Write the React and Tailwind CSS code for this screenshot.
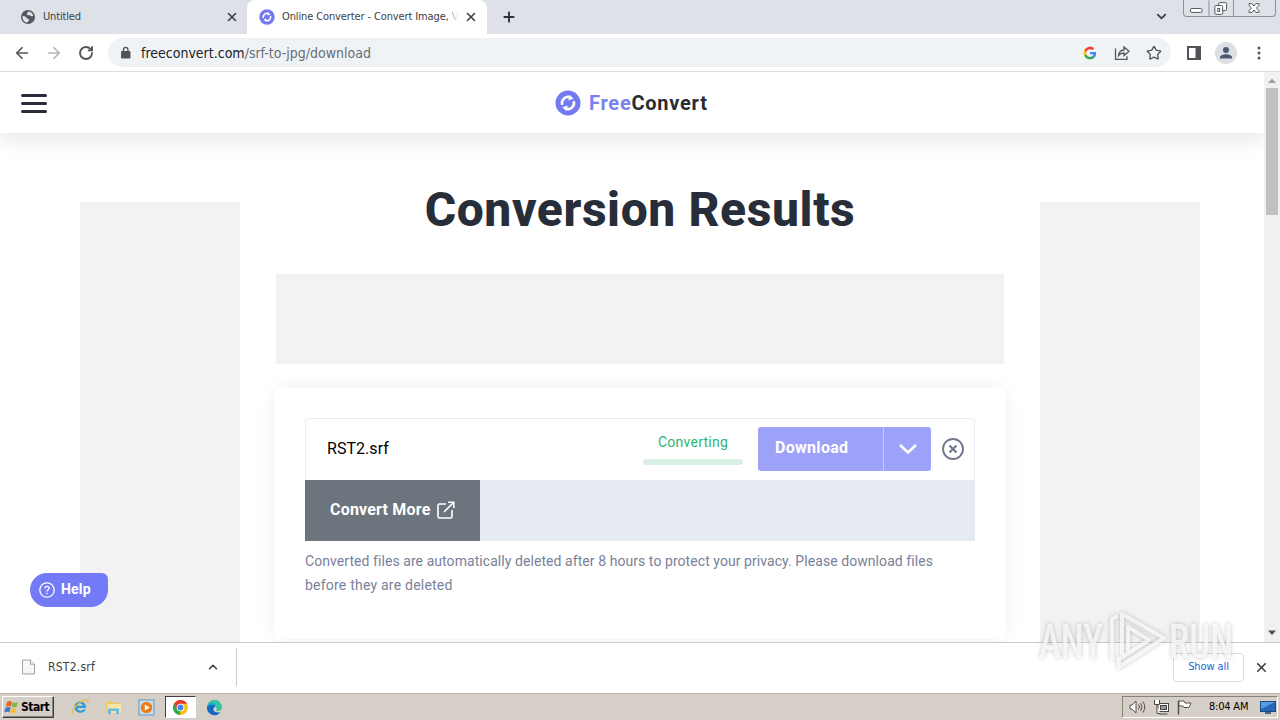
import { Star, X, Plus, ChevronDown, ChevronUp, ArrowLeft, ArrowRight, RotateCw } from "lucide-react";

function GlobeIcon() {
  return (
    <svg viewBox="0 0 16 16" className="size-4 shrink-0">
      <circle cx="8" cy="8" r="7" fill="#54575c" />
      <path d="M2.500 7.200c2.400-.4 3.600.8 4.400 2 .8 1 2.200.2 2.200 1.600 0 1.200-1.200 1.500-1.700 2.800C4.500 13.200 2.200 11 2.500 7.200ZM8 2.500c2.600 0 4.800 1.800 5.300 4.300-1 .9-2.400.4-3.300-.3-.9-.6-2.700.2-3.200-.9C6.500 4.700 7.800 4 8 2.500Z" fill="#dee1e6" />
    </svg>
  );
}

function ConvertLogo({ className }) {
  return (
    <svg viewBox="0 0 26 26" className={className}>
      <circle cx="13" cy="13" r="12.500" fill="#7279f2" />
      <g fill="none" stroke="#fff" strokeWidth="2.600">
        <path d="M7.300 14.800A6 6 0 0 1 15.500 7.500" />
        <path d="M18.700 11.200a6 6 0 0 1-8.200 7.300" />
      </g>
      <path d="m14.500 4.800 4.200 4-5.300 1.800ZM11.500 21.200l-4.200-4 5.300-1.800Z" fill="#fff" />
    </svg>
  );
}

function TabStrip() {
  return (
    <div className="flex h-[34px] bg-[#dee1e8] text-[11px] text-[#3c4043]">
      <div className="flex w-[247px] items-center pl-5">
        <GlobeIcon />
        <span className="ml-[7px] flex-1 tracking-[-0.15px]">Untitled</span>
        <X className="mr-2 size-[14px] text-[#3c4043]" strokeWidth={2.6} />
      </div>
      <div className="flex w-[240px] items-center rounded-t-lg bg-white pl-3">
        <ConvertLogo className="size-4 shrink-0" />
        <span className="ml-[7px] flex-1 whitespace-nowrap tracking-[-0.12px]">
          Online Converter - Convert Image,{" "}
          <span className="bg-gradient-to-r from-gray-400 to-white bg-clip-text text-transparent">V</span>
        </span>
        <X className="mr-[9px] size-[14px] text-[#3c4043]" strokeWidth={2.6} />
      </div>
      <Plus className="mt-[9px] ml-[14px] size-4 text-[#2f3237]" strokeWidth={2.8} />
      <div className="flex-1" />
      <ChevronDown className="mt-[9px] mr-[14px] size-[15px]" strokeWidth={2.8} />
      <div className="mr-1 flex h-[17px] w-[93px] rounded-b-[4px] border border-t-0 border-[#8c9097]">
        <svg viewBox="0 0 93 17" className="h-[17px] w-[92px]" fill="none" stroke="#53565c">
          <path d="M25.500 0v16M50.500 0v16" stroke="#8c9097" />
          <rect x="6.500" y="8.500" width="12" height="4" rx="1.500" fill="#fff" />
          <rect x="35.500" y="2.500" width="8" height="8" rx="1" fill="#fff" />
          <rect x="31.500" y="5.500" width="8" height="9" rx="1" fill="#fff" />
          <rect x="34.500" y="8.500" width="2" height="3" />
          <path d="M66.500 3.500h3l2 2.500 2-2.500h3v2l-2.500 2.500 2.500 2.500v2h-3l-2-2.500-2 2.500h-3v-2l2.500-2.500-2.500-2.500Z" fill="#fff" />
        </svg>
      </div>
    </div>
  );
}

function Toolbar() {
  return (
    <div className="flex h-[38px] items-center border-b border-[#dadce0] bg-white text-[#53565a]">
      <ArrowLeft className="ml-[13px] size-[18px]" strokeWidth={2.3} />
      <ArrowRight className="ml-[14px] size-[18px] text-[#b4b6b9]" strokeWidth={2.3} />
      <RotateCw className="ml-[15px] size-4" strokeWidth={2.8} />
      <div className="ml-[14px] flex h-[29px] w-[1063px] items-center rounded-full bg-[#f0f3f6]">
        <svg viewBox="0 0 10 14" className="ml-[13px] h-[14px] w-[10px]">
          <rect x="0" y="5" width="9.500" height="7.500" rx="1" fill="#505357" />
          <path d="M2.500 5V3.600a2.200 2.200 0 0 1 4.400 0V5" fill="none" stroke="#505357" strokeWidth="1.400" />
        </svg>
        <span className="ml-[10px] flex-1 text-sm">
          <span className="text-[#202124]">freeconvert.com</span>
          <span className="text-[#6b6e73]">/srf-to-jpg/download</span>
        </span>
        <svg viewBox="0 0 24 24" className="size-[14px]">
          <path d="M22.500 12.300c0-.8-.1-1.500-.2-2.200H12v4.200h5.900a5 5 0 0 1-2.200 3.300v2.700h3.600c2-1.900 3.200-4.700 3.200-8Z" fill="#4285f4" />
          <path d="M12 23c3 0 5.500-1 7.300-2.700l-3.600-2.700c-1 .7-2.300 1-3.700 1-2.800 0-5.300-1.900-6.100-4.500H2.200v2.800A11 11 0 0 0 12 23Z" fill="#34a853" />
          <path d="M5.900 14.100a6.600 6.600 0 0 1 0-4.200V7.100H2.200a11 11 0 0 0 0 9.800l3.700-2.800Z" fill="#fbbc05" />
          <path d="M12 5.400c1.600 0 3 .6 4.200 1.600l3.200-3.100A11 11 0 0 0 2.200 7.100l3.700 2.800C6.700 7.300 9.200 5.400 12 5.400Z" fill="#ea4335" />
        </svg>
        <svg viewBox="0 0 16 16" className="ml-[17px] size-4" fill="none" stroke="currentColor" strokeWidth="1.300">
          <path d="M1.500 3.500v10.800h11.500v-3" />
          <path d="M4.500 10.500C5 7 6.800 5.200 10 5V2l5 4.300-5 4.200V8C7.500 8 6 8.700 4.500 10.500Z" />
        </svg>
        <Star className="mr-[9px] ml-4 size-4" strokeWidth={2} />
      </div>
      <svg viewBox="0 0 14 14" className="ml-4 size-[14px]">
        <path d="M0 0h14v14H0zM2 2v10h6.500V2z" fill="#505357" fillRule="evenodd" />
      </svg>
      <svg viewBox="0 0 22 22" className="ml-[14px] size-[22px]">
        <circle cx="11" cy="11" r="11" fill="#dcdfe4" />
        <circle cx="11" cy="8" r="3" fill="#4c5872" />
        <path d="M5 16.500v-1.300c0-2 3.500-3 6-3s6 1 6 3v1.300Z" fill="#4c5872" />
      </svg>
      <svg viewBox="0 0 4 14" className="ml-[20px] h-[14px] w-1" fill="#505357">
        <circle cx="2" cy="2" r="1.500" />
        <circle cx="2" cy="7" r="1.500" />
        <circle cx="2" cy="12" r="1.500" />
      </svg>
    </div>
  );
}

function SiteHeader() {
  return (
    <header className="flex h-[61px] items-center bg-white shadow-[0_8px_20px_rgba(0,0,0,0.09)]">
      <div className="mt-px ml-[21px] flex w-[26px] flex-col gap-[5px]">
        <div className="h-[3px] rounded bg-[#282c38]" />
        <div className="h-[3px] rounded bg-[#282c38]" />
        <div className="h-[3px] rounded bg-[#282c38]" />
      </div>
      <ConvertLogo className="ml-[508px] size-[26px]" />
      <span className="ml-[8px] font-[Roboto] text-xl font-bold tracking-[0.75px] text-[#282d33]">
        <span className="text-[#7b80ef]">Free</span>Convert
      </span>
    </header>
  );
}

function ResultCard() {
  return (
    <div className="mt-6 h-[251px] bg-white px-[30px] pt-[30px] shadow-[0_0_20px_rgba(0,0,0,0.06)]">
      <div className="flex h-[62px] items-center rounded-t border border-b-0 border-[#e9ebf0] pr-[10px] pb-[2px] pl-[21px]">
        <span className="flex-1 text-base tracking-[0.05px] text-black">RST2.srf</span>
        <div className="mr-[15px] flex w-[100px] flex-col items-center">
          <span className="text-sm tracking-[0.25px] text-[#2cb673]">Converting</span>
          <div className="mt-[7px] h-[6px] w-full rounded-sm bg-[#d8f1e4]" />
        </div>
        <div className="mr-[11px] flex h-11 w-[173px] items-center rounded-[3px] bg-[#9da1f8] font-bold text-white">
          <span className="w-[125px] pb-[2px] pl-[17px] text-base tracking-[0.3px]">Download</span>
          <div className="flex h-full flex-1 items-center justify-center border-l border-[#c5c8fc]">
            <svg viewBox="0 0 18 10" className="h-[10px] w-[18px]" fill="none" stroke="#fff" strokeWidth="2.500">
              <path d="m1 1 8 7.500L17 1" />
            </svg>
          </div>
        </div>
        <svg viewBox="0 0 22 22" className="size-[22px]" fill="none" stroke="#73798d" strokeWidth="1.900">
          <circle cx="11" cy="11" r="10" />
          <path d="m7.500 7.500 7 7m0-7-7 7" strokeWidth="2.200" />
        </svg>
      </div>
      <div className="flex h-[61px] bg-[#e6eaf2]">
        <button className="flex w-[175px] items-center bg-[#6c747d] pb-[2px] pl-[25px] text-base font-bold text-white">
          <span className="tracking-[0.2px]">Convert More</span>
          <svg viewBox="0 0 18 18" className="ml-[6px] size-[18px]" fill="none" stroke="#fff" strokeWidth="1.600">
            <path d="M9 3H2.500Q1 3 1 4.500v11Q1 17 2.500 17h11q1.500 0 1.500-1.500V9M11 1.200h5.800V7M16.500 1.500 7 11" />
          </svg>
        </button>
      </div>
      <p className="mt-[8px] whitespace-nowrap text-sm leading-6 text-[#79819a]">
        <span className="tracking-[0.065px]">
          Converted files are automatically deleted after 8 hours to protect your privacy. Please download files
        </span>
        <br />
        <span className="tracking-[0.22px]">before they are deleted</span>
      </p>
    </div>
  );
}

function Scrollbar() {
  return (
    <div className="flex w-4 flex-col items-center bg-[#f1f1f1]">
      <svg viewBox="0 0 16 16" className="h-4 w-4 shrink-0">
        <path d="M4 11h8L8 6.500Z" fill="#a0a0a0" />
      </svg>
      <div className="h-[127px] w-3 bg-[#c1c1c1]" />
      <div className="flex-1" />
      <svg viewBox="0 0 16 16" className="mb-[2px] h-4 w-4">
        <path d="M4 6.500h8L8 11Z" fill="#505050" />
      </svg>
    </div>
  );
}

function DownloadBar() {
  return (
    <div className="flex h-[51px] items-center border-t border-[#c9cbce] bg-white pb-[2px] text-[12px] text-[#3c4043]">
      <svg viewBox="0 0 14 16" className="ml-[22px] h-4 w-[13px]" fill="#f7f7f7" stroke="#999">
        <path d="M.5.500h8.500l4.500 4.500v10.500H.500Z" />
        <path d="M9 .500V5h4.500" />
      </svg>
      <span className="ml-[13px] w-[158px] tracking-[0.25px]">RST2.srf</span>
      <ChevronUp className="size-[14px]" strokeWidth={2.6} />
      <div className="ml-4 h-[38px] w-px bg-[#c9cbce]" />
      <div className="flex-1" />
      <button className="h-[29px] w-[71px] rounded border border-[#dadce0] text-[11px] tracking-[-0.1px] text-[#1967d2]">Show all</button>
      <X className="mr-[11px] ml-[10px] size-[15px]" strokeWidth={2.6} />
    </div>
  );
}

function Taskbar() {
  return (
    <div className="flex h-[27px] items-center border-t border-[#bbb8b2] bg-[#d6cfc7] text-[11px] text-black">
      <button className="ml-[2px] flex h-[22px] w-[52px] items-center border border-t-white border-r-[#404040] border-b-[#404040] border-l-white shadow-[inset_-1px_-1px_#808080]">
        <svg viewBox="0 0 16 16" className="ml-px size-4 shrink-0">
          <path d="M3 3c2-1.500 3.500-1.200 5-.3L6.800 7.500c-1.500-.8-3-.8-5 .2Z" fill="#e8652c" />
          <path d="M8.600 3c1.600 1 3.400 1 5.400 0l-1.300 4.600c-1.800 1-3.600 1-5.200 0Z" fill="#81b843" />
          <path d="M1.600 8.700c2-1.100 3.500-1 5-.2l-1.200 4.800c-1.600-.9-3.300-.8-5.100.2Z" fill="#3a78c8" />
          <path d="M7.300 8.800c1.600.9 3.300.9 5.200 0l-1.200 4.700c-1.900 1-3.700.9-5.200 0Z" fill="#f6bd35" />
        </svg>
        <span className="ml-[1px] text-xs font-bold tracking-[-0.5px]">Start</span>
      </button>
      <svg viewBox="0 0 18 18" className="ml-[17px] size-[18px]">
        <path d="M15 10H6.500c.2 3.300 4.500 3.500 5.500 1.500h2.800c-2 5-11.300 4.200-11.300-2.500C3.500 1.500 15.500 1.500 15 10ZM6.500 7.700h5.300c-.4-3-4.900-3-5.300 0Z" fill="#2f9bdc" />
        <path d="M2 16C-.8 12 12-.5 16.500 2c1 .8.5 2.300-.2 3.500" fill="none" stroke="#e6bd3d" strokeWidth="1.300" />
      </svg>
      <svg viewBox="0 0 17 17" className="ml-4 size-[17px]">
        <path d="M1 3.500 6 2l1 1.500h8V14H1Z" fill="#eac867" />
        <path d="M2.500 5H16v9H2.500Z" fill="#f8e7a6" />
        <path d="M3 15V9.500h11V15h-3v-3H6v3Z" fill="#70b9dc" />
      </svg>
      <svg viewBox="0 0 17 17" className="ml-4 size-[17px]">
        <rect x="1" y="1" width="15" height="15" fill="#c6e0f3" stroke="#5f99c6" />
        <circle cx="8.500" cy="8.500" r="5.800" fill="#ef7d17" />
        <path d="m6.800 5.500 5 3-5 3Z" fill="#fff" />
      </svg>
      <div className="ml-[10px] flex h-[22px] w-[31px] items-center justify-center border border-t-[#404040] border-r-white border-b-white border-l-[#404040] bg-white">
        <svg viewBox="0 0 18 18" className="size-[17px]">
          <circle cx="9" cy="9" r="8" fill="#fbc116" />
          <path d="M2.100 5A8 8 0 0 1 16 5H9L5.600 11Z" fill="#e33b2e" />
          <path d="M2.100 5 5.600 11 9 13l-.8 4A8 8 0 0 1 2.100 5Z" fill="#2da94f" />
          <circle cx="9" cy="9" r="4" fill="#fff" />
          <circle cx="9" cy="9" r="3.100" fill="#4285f4" />
        </svg>
      </div>
      <svg viewBox="0 0 18 18" className="ml-[10px] size-[17px]">
        <path d="M1 9a8 8 0 0 1 16-.5c.1 3-2 4.300-4.800 4.300-2.200 0-1-1.300-1-2.800C11.200 7 3 5.500 1 9Z" fill="#36c4a0" />
        <path d="M1 8.500C3.500 4.500 10 6 10 8c-5 2.500-1 8.500 5.600 5.400C11 20.500.5 17 1 8.500Z" fill="#1468c4" />
        <path d="M1.500 7C4 2.500 9 3.500 11 7 7 5 3 6 1.500 9Z" fill="#229fda" />
      </svg>
      <div className="flex-1" />
      <div className="mr-[2px] flex h-[22px] w-[156px] items-center border border-t-[#85817b] border-r-white border-b-white border-l-[#85817b] pl-[6px]">
        <svg viewBox="0 0 17 16" className="h-4 w-[17px]" fill="#fff" stroke="#55524e">
          <path d="M1 6h2l4-4v12l-4-4H1Z" />
          <path d="M9.500 5.500q2 2.500 0 5M11.500 4q3 4 0 8M14 2.500q3.500 5.500 0 11" fill="none" />
        </svg>
        <svg viewBox="0 0 17 17" className="ml-[7px] size-[17px]" fill="#fff" stroke="#484641">
          <rect x="5" y="4.500" width="10.500" height="8" />
          <rect x="7.500" y="6.500" width="6" height="4" fill="#999" />
          <path d="M1.500 1v4.500h5V1M4 6v8.500h3M6.500 15h8" />
        </svg>
        <svg viewBox="0 0 17 16" className="ml-[6px] h-4 w-[17px]" fill="#fff" stroke="#55524e">
          <path d="M2.500 15.500V1.500" strokeWidth="1.500" />
          <path d="M3 2h5l1 2h6l-2 4.500H8L7 7H3Z" />
        </svg>
        <span className="ml-4 w-[42px] whitespace-nowrap tracking-[-0.2px]">8:04 AM</span>
        <svg viewBox="0 0 16 15" className="ml-[9px] h-[15px] w-4 shrink-0">
          <rect x=".5" y="1.500" width="15" height="10" fill="#2467bd" stroke="#194882" />
          <path d="M1 2h14L1 9Z" fill="#579de2" />
          <path d="M5 12h6v2H5Z" fill="#4c6385" />
        </svg>
      </div>
    </div>
  );
}

function Watermark() {
  return (
    <svg
      viewBox="0 0 200 66"
      className="absolute top-[607px] left-[1036px] h-[66px] w-[200px] drop-shadow-[0_0_2px_rgba(0,0,0,0.3)]"
      fill="none"
      stroke="#fff"
      strokeOpacity="0.75"
      strokeWidth="4"
    >
      <text x="3" y="51" textLength="64" lengthAdjust="spacingAndGlyphs" className="font-[Roboto] text-[49px] font-medium" fill="#fff" fillOpacity="0.75" stroke="none">ANY</text>
      <text x="133" y="51" textLength="64" lengthAdjust="spacingAndGlyphs" className="font-[Roboto] text-[49px] font-medium" fill="#fff" fillOpacity="0.75" stroke="none">RUN</text>
      <path d="M86 48V7l42 24-45 29v-8l30-19-21-13v27" strokeLinejoin="round" />
      <path d="M76 53V12l6-3" />
    </svg>
  );
}

export default function App() {
  return (
    <div className="relative flex h-[720px] w-[1280px] flex-col overflow-hidden bg-white font-['DejaVu_Sans_Condensed','DejaVu_Sans',sans-serif] [font-stretch:condensed]">
      <TabStrip />
      <Toolbar />
      <div className="flex h-[570px]">
        <div className="flex-1 overflow-hidden font-[Roboto] [font-stretch:normal]">
          <SiteHeader />
          <main className="flex gap-[35px] pl-20">
            <div className="mt-[69px] h-[460px] w-40 bg-[#f2f2f2]" />
            <div className="w-[730px]">
              <h1 className="mt-[47px] text-center text-5xl leading-[60px] font-extrabold tracking-[0.6px] whitespace-nowrap text-[#282d3a]">
                Conversion Results
              </h1>
              <div className="mx-px mt-[34px] h-[90px] bg-[#f2f2f2]" />
              <ResultCard />
            </div>
            <div className="mt-[69px] h-[460px] w-40 bg-[#f2f2f2]" />
          </main>
        </div>
        <Scrollbar />
      </div>
      <DownloadBar />
      <Taskbar />
      <button className="absolute top-[573px] left-[30px] flex h-[34px] w-[78px] items-center rounded-[17px] rounded-tr-[6px] bg-[#737af5] pl-[9px] font-[Roboto] text-sm font-bold text-white [font-stretch:normal]">
        <svg viewBox="0 0 16 16" className="size-4" fill="none" stroke="#fff" strokeWidth="1.300">
          <circle cx="8" cy="8" r="7.200" />
          <path d="M5.900 6.500C5.900 3.500 10.200 3.800 10.100 6.300 10 7.800 8 7.800 8 9.500M8 10.800v1.400" />
        </svg>
        <span className="ml-[6px] pb-[2px] tracking-[0.2px]">Help</span>
      </button>
      <Watermark />
    </div>
  );
}
